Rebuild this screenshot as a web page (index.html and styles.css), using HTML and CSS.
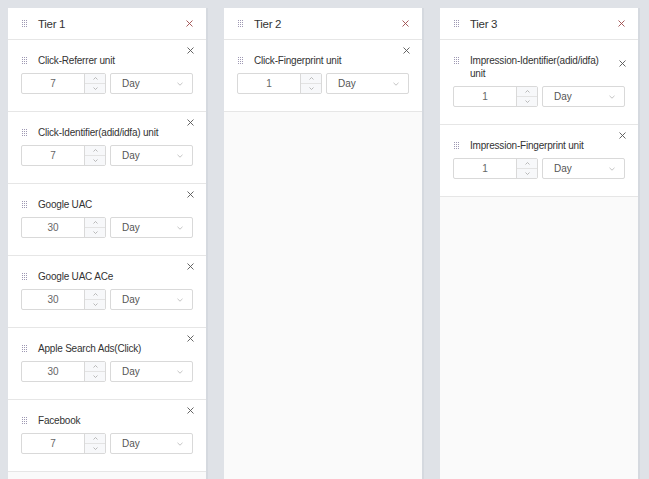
FILE: index.html
```html
<!DOCTYPE html>
<html>
<head>
<meta charset="utf-8">
<link rel="stylesheet" href="styles.css">
</head>
<body>
<div class="board">
  <section class="tier">
    <header class="tier-head">
      <span class="handle"><svg width="6" height="7" viewBox="0 0 6 7"><g fill="#9e98b3"><rect x="0" y="0" width="1" height="1"/><rect x="2" y="0" width="1" height="1"/><rect x="4" y="0" width="1" height="1"/><rect x="0" y="2" width="1" height="1"/><rect x="2" y="2" width="1" height="1"/><rect x="4" y="2" width="1" height="1"/><rect x="0" y="4" width="1" height="1"/><rect x="2" y="4" width="1" height="1"/><rect x="4" y="4" width="1" height="1"/><rect x="0" y="6" width="1" height="1"/><rect x="2" y="6" width="1" height="1"/><rect x="4" y="6" width="1" height="1"/></g></svg></span>
      <span class="tier-title">Tier 1</span>
      <span class="close close-head"><svg width="7" height="7" viewBox="0 0 7 7"><path d="M0.5 0.5L6.5 6.5M6.5 0.5L0.5 6.5" stroke="currentColor" stroke-width="0.9"/></svg></span>
    </header>
    <div class="unit"><div class="unit-top"><span class="handle"><svg width="6" height="7" viewBox="0 0 6 7"><g fill="#9e98b3"><rect x="0" y="0" width="1" height="1"/><rect x="2" y="0" width="1" height="1"/><rect x="4" y="0" width="1" height="1"/><rect x="0" y="2" width="1" height="1"/><rect x="2" y="2" width="1" height="1"/><rect x="4" y="2" width="1" height="1"/><rect x="0" y="4" width="1" height="1"/><rect x="2" y="4" width="1" height="1"/><rect x="4" y="4" width="1" height="1"/><rect x="0" y="6" width="1" height="1"/><rect x="2" y="6" width="1" height="1"/><rect x="4" y="6" width="1" height="1"/></g></svg></span><span class="unit-title">Click-Referrer unit</span><span class="close"><svg width="7" height="7" viewBox="0 0 7 7"><path d="M0.5 0.5L6.5 6.5M6.5 0.5L0.5 6.5" stroke="currentColor" stroke-width="0.9"/></svg></span></div>
      <div class="controls"><div class="num"><span class="num-val">7</span><span class="spin"><span class="spin-btn"><svg width="5" height="3" viewBox="0 0 5 3"><path d="M0.5 2.5L2.5 0.5L4.5 2.5" fill="none" stroke="#a8a8a8" stroke-width="0.8"/></svg></span><span class="spin-btn"><svg width="5" height="3" viewBox="0 0 5 3"><path d="M0.5 0.5L2.5 2.5L4.5 0.5" fill="none" stroke="#a8a8a8" stroke-width="0.8"/></svg></span></span></div><div class="sel"><span>Day</span><svg width="6" height="4" viewBox="0 0 6 4"><path d="M0.5 0.8L3 3.2L5.5 0.8" fill="none" stroke="#bdbdbd" stroke-width="0.9"/></svg></div></div>
    </div>
    <div class="unit"><div class="unit-top"><span class="handle"><svg width="6" height="7" viewBox="0 0 6 7"><g fill="#9e98b3"><rect x="0" y="0" width="1" height="1"/><rect x="2" y="0" width="1" height="1"/><rect x="4" y="0" width="1" height="1"/><rect x="0" y="2" width="1" height="1"/><rect x="2" y="2" width="1" height="1"/><rect x="4" y="2" width="1" height="1"/><rect x="0" y="4" width="1" height="1"/><rect x="2" y="4" width="1" height="1"/><rect x="4" y="4" width="1" height="1"/><rect x="0" y="6" width="1" height="1"/><rect x="2" y="6" width="1" height="1"/><rect x="4" y="6" width="1" height="1"/></g></svg></span><span class="unit-title">Click-Identifier(adid/idfa) unit</span><span class="close"><svg width="7" height="7" viewBox="0 0 7 7"><path d="M0.5 0.5L6.5 6.5M6.5 0.5L0.5 6.5" stroke="currentColor" stroke-width="0.9"/></svg></span></div>
      <div class="controls"><div class="num"><span class="num-val">7</span><span class="spin"><span class="spin-btn"><svg width="5" height="3" viewBox="0 0 5 3"><path d="M0.5 2.5L2.5 0.5L4.5 2.5" fill="none" stroke="#a8a8a8" stroke-width="0.8"/></svg></span><span class="spin-btn"><svg width="5" height="3" viewBox="0 0 5 3"><path d="M0.5 0.5L2.5 2.5L4.5 0.5" fill="none" stroke="#a8a8a8" stroke-width="0.8"/></svg></span></span></div><div class="sel"><span>Day</span><svg width="6" height="4" viewBox="0 0 6 4"><path d="M0.5 0.8L3 3.2L5.5 0.8" fill="none" stroke="#bdbdbd" stroke-width="0.9"/></svg></div></div>
    </div>
    <div class="unit"><div class="unit-top"><span class="handle"><svg width="6" height="7" viewBox="0 0 6 7"><g fill="#9e98b3"><rect x="0" y="0" width="1" height="1"/><rect x="2" y="0" width="1" height="1"/><rect x="4" y="0" width="1" height="1"/><rect x="0" y="2" width="1" height="1"/><rect x="2" y="2" width="1" height="1"/><rect x="4" y="2" width="1" height="1"/><rect x="0" y="4" width="1" height="1"/><rect x="2" y="4" width="1" height="1"/><rect x="4" y="4" width="1" height="1"/><rect x="0" y="6" width="1" height="1"/><rect x="2" y="6" width="1" height="1"/><rect x="4" y="6" width="1" height="1"/></g></svg></span><span class="unit-title">Google UAC</span><span class="close"><svg width="7" height="7" viewBox="0 0 7 7"><path d="M0.5 0.5L6.5 6.5M6.5 0.5L0.5 6.5" stroke="currentColor" stroke-width="0.9"/></svg></span></div>
      <div class="controls"><div class="num"><span class="num-val">30</span><span class="spin"><span class="spin-btn"><svg width="5" height="3" viewBox="0 0 5 3"><path d="M0.5 2.5L2.5 0.5L4.5 2.5" fill="none" stroke="#a8a8a8" stroke-width="0.8"/></svg></span><span class="spin-btn"><svg width="5" height="3" viewBox="0 0 5 3"><path d="M0.5 0.5L2.5 2.5L4.5 0.5" fill="none" stroke="#a8a8a8" stroke-width="0.8"/></svg></span></span></div><div class="sel"><span>Day</span><svg width="6" height="4" viewBox="0 0 6 4"><path d="M0.5 0.8L3 3.2L5.5 0.8" fill="none" stroke="#bdbdbd" stroke-width="0.9"/></svg></div></div>
    </div>
    <div class="unit"><div class="unit-top"><span class="handle"><svg width="6" height="7" viewBox="0 0 6 7"><g fill="#9e98b3"><rect x="0" y="0" width="1" height="1"/><rect x="2" y="0" width="1" height="1"/><rect x="4" y="0" width="1" height="1"/><rect x="0" y="2" width="1" height="1"/><rect x="2" y="2" width="1" height="1"/><rect x="4" y="2" width="1" height="1"/><rect x="0" y="4" width="1" height="1"/><rect x="2" y="4" width="1" height="1"/><rect x="4" y="4" width="1" height="1"/><rect x="0" y="6" width="1" height="1"/><rect x="2" y="6" width="1" height="1"/><rect x="4" y="6" width="1" height="1"/></g></svg></span><span class="unit-title">Google UAC ACe</span><span class="close"><svg width="7" height="7" viewBox="0 0 7 7"><path d="M0.5 0.5L6.5 6.5M6.5 0.5L0.5 6.5" stroke="currentColor" stroke-width="0.9"/></svg></span></div>
      <div class="controls"><div class="num"><span class="num-val">30</span><span class="spin"><span class="spin-btn"><svg width="5" height="3" viewBox="0 0 5 3"><path d="M0.5 2.5L2.5 0.5L4.5 2.5" fill="none" stroke="#a8a8a8" stroke-width="0.8"/></svg></span><span class="spin-btn"><svg width="5" height="3" viewBox="0 0 5 3"><path d="M0.5 0.5L2.5 2.5L4.5 0.5" fill="none" stroke="#a8a8a8" stroke-width="0.8"/></svg></span></span></div><div class="sel"><span>Day</span><svg width="6" height="4" viewBox="0 0 6 4"><path d="M0.5 0.8L3 3.2L5.5 0.8" fill="none" stroke="#bdbdbd" stroke-width="0.9"/></svg></div></div>
    </div>
    <div class="unit"><div class="unit-top"><span class="handle"><svg width="6" height="7" viewBox="0 0 6 7"><g fill="#9e98b3"><rect x="0" y="0" width="1" height="1"/><rect x="2" y="0" width="1" height="1"/><rect x="4" y="0" width="1" height="1"/><rect x="0" y="2" width="1" height="1"/><rect x="2" y="2" width="1" height="1"/><rect x="4" y="2" width="1" height="1"/><rect x="0" y="4" width="1" height="1"/><rect x="2" y="4" width="1" height="1"/><rect x="4" y="4" width="1" height="1"/><rect x="0" y="6" width="1" height="1"/><rect x="2" y="6" width="1" height="1"/><rect x="4" y="6" width="1" height="1"/></g></svg></span><span class="unit-title">Apple Search Ads(Click)</span><span class="close"><svg width="7" height="7" viewBox="0 0 7 7"><path d="M0.5 0.5L6.5 6.5M6.5 0.5L0.5 6.5" stroke="currentColor" stroke-width="0.9"/></svg></span></div>
      <div class="controls"><div class="num"><span class="num-val">30</span><span class="spin"><span class="spin-btn"><svg width="5" height="3" viewBox="0 0 5 3"><path d="M0.5 2.5L2.5 0.5L4.5 2.5" fill="none" stroke="#a8a8a8" stroke-width="0.8"/></svg></span><span class="spin-btn"><svg width="5" height="3" viewBox="0 0 5 3"><path d="M0.5 0.5L2.5 2.5L4.5 0.5" fill="none" stroke="#a8a8a8" stroke-width="0.8"/></svg></span></span></div><div class="sel"><span>Day</span><svg width="6" height="4" viewBox="0 0 6 4"><path d="M0.5 0.8L3 3.2L5.5 0.8" fill="none" stroke="#bdbdbd" stroke-width="0.9"/></svg></div></div>
    </div>
    <div class="unit"><div class="unit-top"><span class="handle"><svg width="6" height="7" viewBox="0 0 6 7"><g fill="#9e98b3"><rect x="0" y="0" width="1" height="1"/><rect x="2" y="0" width="1" height="1"/><rect x="4" y="0" width="1" height="1"/><rect x="0" y="2" width="1" height="1"/><rect x="2" y="2" width="1" height="1"/><rect x="4" y="2" width="1" height="1"/><rect x="0" y="4" width="1" height="1"/><rect x="2" y="4" width="1" height="1"/><rect x="4" y="4" width="1" height="1"/><rect x="0" y="6" width="1" height="1"/><rect x="2" y="6" width="1" height="1"/><rect x="4" y="6" width="1" height="1"/></g></svg></span><span class="unit-title">Facebook</span><span class="close"><svg width="7" height="7" viewBox="0 0 7 7"><path d="M0.5 0.5L6.5 6.5M6.5 0.5L0.5 6.5" stroke="currentColor" stroke-width="0.9"/></svg></span></div>
      <div class="controls"><div class="num"><span class="num-val">7</span><span class="spin"><span class="spin-btn"><svg width="5" height="3" viewBox="0 0 5 3"><path d="M0.5 2.5L2.5 0.5L4.5 2.5" fill="none" stroke="#a8a8a8" stroke-width="0.8"/></svg></span><span class="spin-btn"><svg width="5" height="3" viewBox="0 0 5 3"><path d="M0.5 0.5L2.5 2.5L4.5 0.5" fill="none" stroke="#a8a8a8" stroke-width="0.8"/></svg></span></span></div><div class="sel"><span>Day</span><svg width="6" height="4" viewBox="0 0 6 4"><path d="M0.5 0.8L3 3.2L5.5 0.8" fill="none" stroke="#bdbdbd" stroke-width="0.9"/></svg></div></div>
    </div>
  </section>

  <section class="tier">
    <header class="tier-head">
      <span class="handle"><svg width="6" height="7" viewBox="0 0 6 7"><g fill="#9e98b3"><rect x="0" y="0" width="1" height="1"/><rect x="2" y="0" width="1" height="1"/><rect x="4" y="0" width="1" height="1"/><rect x="0" y="2" width="1" height="1"/><rect x="2" y="2" width="1" height="1"/><rect x="4" y="2" width="1" height="1"/><rect x="0" y="4" width="1" height="1"/><rect x="2" y="4" width="1" height="1"/><rect x="4" y="4" width="1" height="1"/><rect x="0" y="6" width="1" height="1"/><rect x="2" y="6" width="1" height="1"/><rect x="4" y="6" width="1" height="1"/></g></svg></span>
      <span class="tier-title">Tier 2</span>
      <span class="close close-head"><svg width="7" height="7" viewBox="0 0 7 7"><path d="M0.5 0.5L6.5 6.5M6.5 0.5L0.5 6.5" stroke="currentColor" stroke-width="0.9"/></svg></span>
    </header>
    <div class="unit"><div class="unit-top"><span class="handle"><svg width="6" height="7" viewBox="0 0 6 7"><g fill="#9e98b3"><rect x="0" y="0" width="1" height="1"/><rect x="2" y="0" width="1" height="1"/><rect x="4" y="0" width="1" height="1"/><rect x="0" y="2" width="1" height="1"/><rect x="2" y="2" width="1" height="1"/><rect x="4" y="2" width="1" height="1"/><rect x="0" y="4" width="1" height="1"/><rect x="2" y="4" width="1" height="1"/><rect x="4" y="4" width="1" height="1"/><rect x="0" y="6" width="1" height="1"/><rect x="2" y="6" width="1" height="1"/><rect x="4" y="6" width="1" height="1"/></g></svg></span><span class="unit-title">Click-Fingerprint unit</span><span class="close"><svg width="7" height="7" viewBox="0 0 7 7"><path d="M0.5 0.5L6.5 6.5M6.5 0.5L0.5 6.5" stroke="currentColor" stroke-width="0.9"/></svg></span></div>
      <div class="controls"><div class="num"><span class="num-val">1</span><span class="spin"><span class="spin-btn"><svg width="5" height="3" viewBox="0 0 5 3"><path d="M0.5 2.5L2.5 0.5L4.5 2.5" fill="none" stroke="#a8a8a8" stroke-width="0.8"/></svg></span><span class="spin-btn"><svg width="5" height="3" viewBox="0 0 5 3"><path d="M0.5 0.5L2.5 2.5L4.5 0.5" fill="none" stroke="#a8a8a8" stroke-width="0.8"/></svg></span></span></div><div class="sel"><span>Day</span><svg width="6" height="4" viewBox="0 0 6 4"><path d="M0.5 0.8L3 3.2L5.5 0.8" fill="none" stroke="#bdbdbd" stroke-width="0.9"/></svg></div></div>
    </div>
  </section>

  <section class="tier">
    <header class="tier-head">
      <span class="handle"><svg width="6" height="7" viewBox="0 0 6 7"><g fill="#9e98b3"><rect x="0" y="0" width="1" height="1"/><rect x="2" y="0" width="1" height="1"/><rect x="4" y="0" width="1" height="1"/><rect x="0" y="2" width="1" height="1"/><rect x="2" y="2" width="1" height="1"/><rect x="4" y="2" width="1" height="1"/><rect x="0" y="4" width="1" height="1"/><rect x="2" y="4" width="1" height="1"/><rect x="4" y="4" width="1" height="1"/><rect x="0" y="6" width="1" height="1"/><rect x="2" y="6" width="1" height="1"/><rect x="4" y="6" width="1" height="1"/></g></svg></span>
      <span class="tier-title">Tier 3</span>
      <span class="close close-head"><svg width="7" height="7" viewBox="0 0 7 7"><path d="M0.5 0.5L6.5 6.5M6.5 0.5L0.5 6.5" stroke="currentColor" stroke-width="0.9"/></svg></span>
    </header>
    <div class="unit"><div class="unit-top"><span class="handle"><svg width="6" height="7" viewBox="0 0 6 7"><g fill="#9e98b3"><rect x="0" y="0" width="1" height="1"/><rect x="2" y="0" width="1" height="1"/><rect x="4" y="0" width="1" height="1"/><rect x="0" y="2" width="1" height="1"/><rect x="2" y="2" width="1" height="1"/><rect x="4" y="2" width="1" height="1"/><rect x="0" y="4" width="1" height="1"/><rect x="2" y="4" width="1" height="1"/><rect x="4" y="4" width="1" height="1"/><rect x="0" y="6" width="1" height="1"/><rect x="2" y="6" width="1" height="1"/><rect x="4" y="6" width="1" height="1"/></g></svg></span><span class="unit-title">Impression-Identifier(adid/idfa) unit</span><span class="close"><svg width="7" height="7" viewBox="0 0 7 7"><path d="M0.5 0.5L6.5 6.5M6.5 0.5L0.5 6.5" stroke="currentColor" stroke-width="0.9"/></svg></span></div>
      <div class="controls"><div class="num"><span class="num-val">1</span><span class="spin"><span class="spin-btn"><svg width="5" height="3" viewBox="0 0 5 3"><path d="M0.5 2.5L2.5 0.5L4.5 2.5" fill="none" stroke="#a8a8a8" stroke-width="0.8"/></svg></span><span class="spin-btn"><svg width="5" height="3" viewBox="0 0 5 3"><path d="M0.5 0.5L2.5 2.5L4.5 0.5" fill="none" stroke="#a8a8a8" stroke-width="0.8"/></svg></span></span></div><div class="sel"><span>Day</span><svg width="6" height="4" viewBox="0 0 6 4"><path d="M0.5 0.8L3 3.2L5.5 0.8" fill="none" stroke="#bdbdbd" stroke-width="0.9"/></svg></div></div>
    </div>
    <div class="unit"><div class="unit-top"><span class="handle"><svg width="6" height="7" viewBox="0 0 6 7"><g fill="#9e98b3"><rect x="0" y="0" width="1" height="1"/><rect x="2" y="0" width="1" height="1"/><rect x="4" y="0" width="1" height="1"/><rect x="0" y="2" width="1" height="1"/><rect x="2" y="2" width="1" height="1"/><rect x="4" y="2" width="1" height="1"/><rect x="0" y="4" width="1" height="1"/><rect x="2" y="4" width="1" height="1"/><rect x="4" y="4" width="1" height="1"/><rect x="0" y="6" width="1" height="1"/><rect x="2" y="6" width="1" height="1"/><rect x="4" y="6" width="1" height="1"/></g></svg></span><span class="unit-title">Impression-Fingerprint unit</span><span class="close"><svg width="7" height="7" viewBox="0 0 7 7"><path d="M0.5 0.5L6.5 6.5M6.5 0.5L0.5 6.5" stroke="currentColor" stroke-width="0.9"/></svg></span></div>
      <div class="controls"><div class="num"><span class="num-val">1</span><span class="spin"><span class="spin-btn"><svg width="5" height="3" viewBox="0 0 5 3"><path d="M0.5 2.5L2.5 0.5L4.5 2.5" fill="none" stroke="#a8a8a8" stroke-width="0.8"/></svg></span><span class="spin-btn"><svg width="5" height="3" viewBox="0 0 5 3"><path d="M0.5 0.5L2.5 2.5L4.5 0.5" fill="none" stroke="#a8a8a8" stroke-width="0.8"/></svg></span></span></div><div class="sel"><span>Day</span><svg width="6" height="4" viewBox="0 0 6 4"><path d="M0.5 0.8L3 3.2L5.5 0.8" fill="none" stroke="#bdbdbd" stroke-width="0.9"/></svg></div></div>
    </div>
  </section>
</div>
</body>
</html>
```

FILE: styles.css
```css
* { box-sizing: border-box; }
html, body { margin: 0; height: 100%; }
body {
  background: #dfe2e7;
  font-family: "Liberation Sans", Arial, sans-serif;
  color: #333;
  overflow: hidden;
}
.board {
  display: flex;
  gap: 18px;
  padding: 8px 8px 0;
  height: 100%;
}
.tier {
  width: 198px;
  flex: none;
  height: 100%;
  background: #fafafa;
  box-shadow: 2px 0 0 #d5d9df;
  overflow: hidden;
}
.tier-head {
  height: 32px;
  display: flex;
  align-items: center;
  padding: 0 13px 0 14px;
  background: #fff;
  border-bottom: 1px solid #e6e6e6;
}
.handle {
  display: flex;
  width: 16px;
  flex: none;
  align-self: flex-start;
}
.tier-head .handle { align-self: center; }
.tier-title {
  flex: 1;
  font-size: 11.5px;
  color: #333;
  letter-spacing: -0.3px;
}
.close {
  display: flex;
  flex: none;
  color: #555;
}
.close-head { color: #9c4a4a; }
.unit {
  background: #fff;
  border-bottom: 1px solid #e6e6e6;
  padding: 14px 13px 17px;
}
.unit-top {
  display: flex;
  align-items: flex-end;
  padding-left: 1px;
}
.unit-top .handle { margin-top: 3px; }
.unit-title {
  flex: 1;
  font-size: 10px;
  line-height: 13px;
  letter-spacing: -0.2px;
  color: #333;
  padding-right: 10px;
}
.unit-top .close {
  margin-top: -20px;
  margin-bottom: 13px;
  margin-right: -1px;
}
.controls {
  display: flex;
  gap: 4px;
  margin-top: 6px;
}
.num {
  width: 85px;
  height: 21px;
  border: 1px solid #d9d9d9;
  border-radius: 2px;
  display: flex;
  background: #fff;
}
.num-val {
  flex: 1;
  text-align: center;
  font-size: 10px;
  line-height: 19px;
  color: #666;
}
.spin {
  width: 21px;
  display: flex;
  flex-direction: column;
  border-left: 1px solid #d9d9d9;
  background: #f7f8fa;
}
.spin-btn {
  flex: 1;
  display: flex;
  align-items: center;
  justify-content: center;
}
.spin-btn + .spin-btn { border-top: 1px solid #e3e3e3; }
.sel {
  width: 83px;
  height: 21px;
  border: 1px solid #d9d9d9;
  border-radius: 2px;
  display: flex;
  align-items: center;
  justify-content: space-between;
  padding: 0 9px 0 11px;
  font-size: 10px;
  color: #555;
  background: #fff;
}
```
